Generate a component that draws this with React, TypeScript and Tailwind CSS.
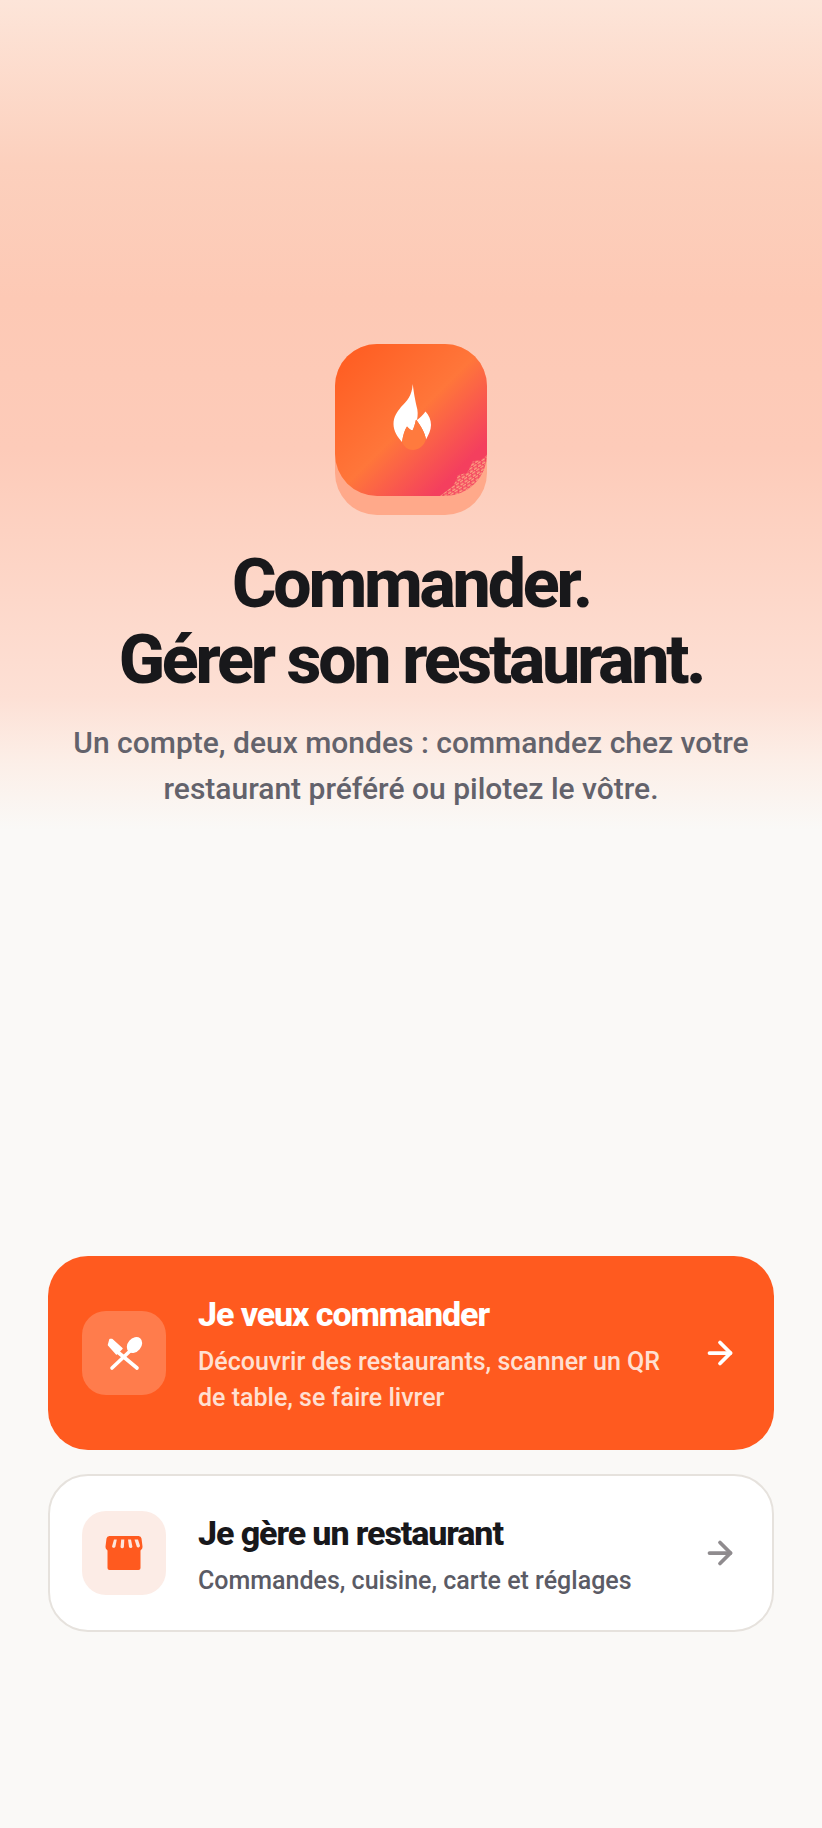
import { ArrowRight } from "lucide-react";

function Flame() {
  return (
    <svg viewBox="0 0 80 90" className="mb-[10px] h-[90px] w-[80px]">
      <path d="M41.7 14 C43 24 44 29 45.5 36 C47 41 47 45 46 50 C49 48 52 45 54.5 41.5 C58 45 60 50 60 55 C60 60 57.5 65 55 69.5 C54 63 50 56 45 49.5 C44 54 43 58 41.5 60.5 C39.5 60 37.5 58 36 56.5 C33.5 60 32 66 31 72 C26.5 67 22.5 61 22.5 54 C22.5 47 26 42 30 37 C36 31 41 26 41.7 14 Z" fill="#fff" />
      <path d="M31 72 C32 66 33.5 60 36 56.5 C37.5 58 39.5 60 41.5 60.5 C43 58 44 54 45 49.5 C50 56 54 63 55 69.5 C53 76 47 80 42 80 C37 80 33 77 31 72 Z" fill="#ff7a3e" />
    </svg>
  );
}

function Logo() {
  return (
    <div className="mb-[31px] rounded-[42px] bg-[#ffa98a] pb-[19px]">
      <div className="relative flex h-[152px] w-[152px] items-center justify-center overflow-hidden rounded-[42px] bg-[linear-gradient(135deg,#ff5a1f_0%,#ff763a_50%,#f43f5e_82%)]">
        <Flame />
        <svg viewBox="0 0 60 50" className="absolute bottom-0 right-0 h-[50px] w-[60px]">
          <defs>
            <pattern id="dots" width="5" height="5" patternUnits="userSpaceOnUse" patternTransform="rotate(-35)">
              <path d="M0 1.2 H3.6 M1.2 3.6 H5" stroke="#fca582" strokeWidth="1.5" fill="none" />
            </pattern>
          </defs>
          <path d="M13 50 L27 39 L31 29 L40 27 L46 15 L54 14 L60 9 L60 50 Z" fill="url(#dots)" />
        </svg>
      </div>
    </div>
  );
}

function Cutlery() {
  return (
    <svg viewBox="0 0 40 40" className="h-10 w-10">
      <ellipse cx="30.5" cy="12" rx="6.8" ry="8.8" transform="rotate(40 30.5 12)" fill="#fff" />
      <path d="M26 18 L8 35" stroke="#fff" strokeWidth="3.6" strokeLinecap="round" />
      <path d="M12.5 18 L33 35" stroke="#fff" strokeWidth="3.6" strokeLinecap="round" fill="none" />
      <path d="M6 6.5 L4.5 12 L12.5 21 L18 15.5 L8 6.5 Z" fill="#fff" strokeLinejoin="round" stroke="#fff" strokeWidth="1.5" />
    </svg>
  );
}

function Store() {
  return (
    <svg viewBox="0 0 40 40" className="h-10 w-10">
      <path d="M3.5 17 H36.5 V35 a2 2 0 0 1 -2 2 H5.5 a2 2 0 0 1 -2 -2 Z" fill="#ff5a1f" />
      <path d="M5.5 3 H34.5 a3 3 0 0 1 3 2.5 L38.5 13.5 a4.2 4.2 0 0 1 -4 4.5 H5.5 a4.2 4.2 0 0 1 -4 -4.5 L2.5 5.5 a3 3 0 0 1 3 -2.5 Z" fill="#ff5a1f" />
      <path d="M10 6.5 L8 13.5 a1.8 1.8 0 0 0 3.4 0.3 L12.8 6.5 Z M17.2 6.5 L16.5 14 a1.8 1.8 0 0 0 3.4 0 L20.3 6.5 Z M24 6.5 L25 14 a1.8 1.8 0 0 0 3.4 -0.2 L27 6.5 Z M30.5 6.5 L32.8 13.8 a1.8 1.8 0 0 0 3.2 -1 L34 6.5 Z" fill="#fce6dc" />
    </svg>
  );
}

export default function App() {
  return (
    <div className="flex min-h-[1828px] flex-col bg-[#faf9f7] font-['Roboto',sans-serif]">
      <section className="flex h-[830px] flex-col items-center bg-[linear-gradient(180deg,#fde5d9_0%,#fcd0bd_20%,#fdc9b5_36%,#fdcbb9_54%,#fdd2c2_64%,#fde0d5_84%,#fcefe8_92%,#faf9f7_100%)] px-10 pt-[344px]">
        <Logo />
        <h1 className="text-center text-[68px] font-extrabold leading-[76px] tracking-[-3.2px] text-[#18181b]">
          Commander.
          <br />
          Gérer son restaurant.
        </h1>
        <p className="mt-[22px] text-center text-[30px] font-medium leading-[46px] text-[#63626b]">
          Un compte, deux mondes : commandez chez votre
          <br />
          restaurant préféré ou pilotez le vôtre.
        </p>
      </section>
      <div className="mt-[426px] flex flex-col gap-6 px-12">
        <div className="flex h-[194px] items-center rounded-[40px] bg-[#ff5a1f] pl-[34px] pr-[36px]">
          <div className="flex h-[84px] w-[84px] shrink-0 items-center justify-center rounded-[24px] bg-[#ff7c4c]">
            <Cutlery />
          </div>
          <div className="ml-[32px] min-w-0 flex-1 pt-[3px]">
            <div className="text-[34px] font-extrabold leading-[40px] tracking-[-1.1px] text-white">Je veux commander</div>
            <div className="mt-[10px] text-[25px] font-medium leading-[36px] text-[#ffe0d2]">
              Découvrir des restaurants, scanner un QR
              <br />
              de table, se faire livrer
            </div>
          </div>
          <ArrowRight size={36} strokeWidth={2.5} className="shrink-0 text-white" />
        </div>
        <div className="flex h-[158px] items-center rounded-[40px] border-2 border-[#e6e2dd] bg-white pl-[32px] pr-[34px]">
          <div className="flex h-[84px] w-[84px] shrink-0 items-center justify-center rounded-[24px] bg-[#fcece6]">
            <Store />
          </div>
          <div className="ml-[32px] min-w-0 flex-1 pt-[5px]">
            <div className="text-[34px] font-extrabold leading-[40px] tracking-[-1.1px] text-[#18181b]">Je gère un restaurant</div>
            <div className="mt-[10px] text-[25px] font-medium leading-[36px] text-[#5b5b65]">Commandes, cuisine, carte et réglages</div>
          </div>
          <ArrowRight size={36} strokeWidth={2.5} className="shrink-0 text-[#8f8b8e]" />
        </div>
      </div>
    </div>
  );
}
